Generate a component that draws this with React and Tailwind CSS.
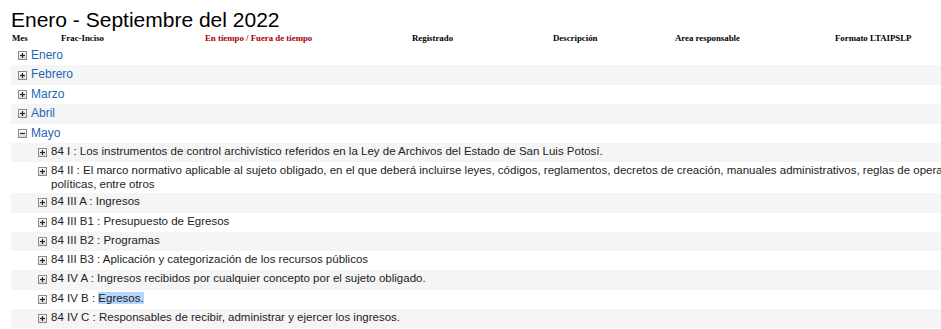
import React from "react";

const months = ["Enero", "Febrero", "Marzo", "Abril"];

const items = [
  "84 I : Los instrumentos de control archivístico referidos en la Ley de Archivos del Estado de San Luis Potosí.",
  "84 II : El marco normativo aplicable al sujeto obligado, en el que deberá incluirse leyes, códigos, reglamentos, decretos de creación, manuales administrativos, reglas de operación, políticas, entre otros",
  "84 III A : Ingresos",
  "84 III B1 : Presupuesto de Egresos",
  "84 III B2 : Programas",
  "84 III B3 : Aplicación y categorización de los recursos públicos",
  "84 IV A : Ingresos recibidos por cualquier concepto por el sujeto obligado.",
  "84 IV B : ",
  "84 IV C : Responsables de recibir, administrar y ejercer los ingresos.",
];

function Box({ open }) {
  return (
    <svg width="9" height="9" viewBox="0 0 9 9" className="shrink-0">
      <defs>
        <linearGradient id="bx" x1="0" y1="0" x2="0" y2="1">
          <stop offset="0" stopColor="#ffffff" />
          <stop offset="1" stopColor="#d9d9d9" />
        </linearGradient>
      </defs>
      <rect x="0.5" y="0.5" width="8" height="8" fill="url(#bx)" stroke="#8a8a8a" />
      <path d="M2 4.5h5" stroke="#222" strokeWidth="1.2" />
      {!open && <path d="M4.5 2v5" stroke="#222" strokeWidth="1.2" />}
    </svg>
  );
}

export default function App() {
  return (
    <div className="w-[941px] h-[329px] overflow-hidden bg-white text-[#222] font-['Liberation_Sans',Arial,sans-serif]">
      <h1 className="px-[11px] pt-[7px] text-[21px] leading-[25px] text-black">
        Enero - Septiembre del 2022
      </h1>

      <div className="flex mt-[1px] text-[8.8px] leading-[11px] font-bold font-['Liberation_Serif','Times_New_Roman',serif] text-black">
        <div className="w-[61px] pl-[12px]">Mes</div>
        <div className="w-[144px]">Frac-Inciso</div>
        <div className="w-[207px] text-[#a40000]">En tiempo / Fuera de tiempo</div>
        <div className="w-[141px]">Registrado</div>
        <div className="w-[122px]">Descripción</div>
        <div className="w-[160px]">Area responsable</div>
        <div>Formato LTAIPSLP</div>
      </div>

      <div className="ml-[11px] mt-[2px] w-[1000px] text-[11.5px] leading-[13.5px]">
        {months.map((m, i) => (
          <div
            key={m}
            className={`flex items-center gap-[4px] pl-[7px] h-[19.4px] ${i % 2 ? "bg-[#f5f5f5]" : ""}`}
          >
            <Box />
            <span className="text-[12px] text-[#1f66b5]">{m}</span>
          </div>
        ))}
        <div className="flex items-center gap-[4px] pl-[7px] h-[19.4px]">
          <Box open />
          <span className="text-[12px] text-[#1f66b5]">Mayo</span>
        </div>

        {items.map((t, i) => (
          <div
            key={i}
            className={`flex items-start gap-[4px] pl-[27px] py-[2px] min-h-[19.3px] ${i % 2 ? "" : "bg-[#f5f5f5]"}`}
          >
            <div className="pt-[3px]">
              <Box />
            </div>
            <div className="text-[#222]">
              {t}
              {i === 7 && <span className="bg-[#b4d5fe]">Egresos.</span>}
            </div>
          </div>
        ))}
      </div>
    </div>
  );
}
